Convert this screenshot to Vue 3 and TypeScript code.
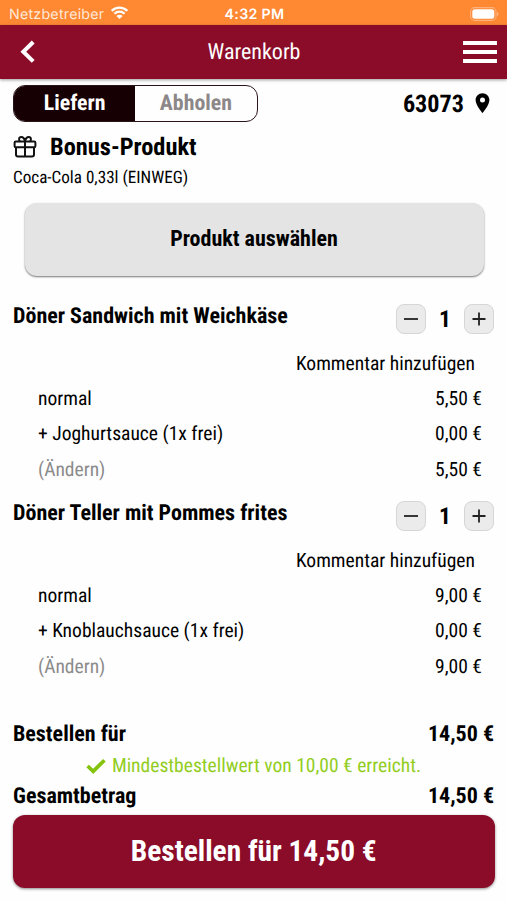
<script setup lang="ts">
interface Line {
  label: string
  price: string
  muted?: boolean
}

interface CartItem {
  name: string
  quantity: number
  lines: Line[]
}

const items: CartItem[] = [
  {
    name: 'Döner Sandwich mit Weichkäse',
    quantity: 1,
    lines: [
      { label: 'normal', price: '5,50 €' },
      { label: '+ Joghurtsauce (1x frei)', price: '0,00 €' },
      { label: '(Ändern)', price: '5,50 €', muted: true },
    ],
  },
  {
    name: 'Döner Teller mit Pommes frites',
    quantity: 1,
    lines: [
      { label: 'normal', price: '9,00 €' },
      { label: '+ Knoblauchsauce (1x frei)', price: '0,00 €' },
      { label: '(Ändern)', price: '9,00 €', muted: true },
    ],
  },
]
</script>

<template>
  <div class="screen">
    <div class="status">
      <span class="carrier">Netzbetreiber
        <svg class="wifi" width="19" height="14" viewBox="0 0 20 15">
          <path d="M1.6 5.2a12 12 0 0 1 16.8 0M4.6 8.3a7.7 7.7 0 0 1 10.8 0" fill="none" stroke="#fff" stroke-width="2.5" />
          <path d="M10 14 6.7 10.7a4.7 4.7 0 0 1 6.6 0Z" fill="#fff" />
        </svg>
      </span>
      <span class="clock">4:32 PM</span>
      <svg class="battery" width="30" height="14" viewBox="0 0 30 14">
        <rect x="0.6" y="0.6" width="25.4" height="12.8" rx="4" fill="none" stroke="#fff" stroke-opacity=".35" stroke-width="1.1" />
        <rect x="2.3" y="2.2" width="22" height="9.6" rx="2.5" fill="#fff" />
        <path d="M27.2 5v4.2c1.6-.6 1.6-3.6 0-4.2Z" fill="#fff" fill-opacity=".5" />
      </svg>
    </div>

    <header class="bar">
      <svg class="back" width="16" height="24" viewBox="0 0 16 24">
        <path d="M13.2 2 3.3 11.7l9.9 9.7" fill="none" stroke="#fff" stroke-width="4" />
      </svg>
      <h1 class="title">Warenkorb</h1>
      <div class="burger"><i></i><i></i><i></i></div>
    </header>

    <main class="body">
      <div class="mode">
        <div class="toggle">
          <span class="option active">Liefern</span>
          <span class="option">Abholen</span>
        </div>
        <div class="zip">
          <span>63073</span>
          <svg width="15" height="21" viewBox="0 0 14 21">
            <path fill-rule="evenodd" d="M7 .3C3.1.3.1 3.3.1 7.1.1 12.2 7 20.3 7 20.3s6.9-8.1 6.9-13.2C13.9 3.3 10.9.3 7 .3Zm0 4.3a2.5 2.5 0 1 1 0 5 2.5 2.5 0 0 1 0-5Z" fill="#000" />
          </svg>
        </div>
      </div>

      <div class="bonus">
        <svg width="24" height="22" viewBox="0 0 24 22">
          <g fill="none" stroke="#111" stroke-width="2">
            <rect x="1.6" y="5.6" width="20.8" height="5.6" rx="1.2" />
            <path d="M3 11.2v7.2q0 2 2 2h14q2 0 2-2v-7.2M12 5.6v14.8M12 5.4C11.4 2.5 9.9 1.1 8.2 1.1c-2.6 0-2.8 3.7-.8 4.4M12 5.4c.6-2.9 2.1-4.3 3.8-4.3 2.6 0 2.8 3.7.8 4.4" />
          </g>
        </svg>
        <h2>Bonus-Produkt</h2>
      </div>
      <p class="bonus-name">Coca-Cola 0,33l (EINWEG)</p>
      <button class="choose"><span>Produkt auswählen</span></button>

      <section v-for="item in items" :key="item.name" class="item">
        <div class="item-head">
          <h3>{{ item.name }}</h3>
          <div class="stepper">
            <button><svg width="14" height="14" viewBox="0 0 14 14"><path d="M0 7h14" stroke="#222" stroke-width="1.8" /></svg></button>
            <b>{{ item.quantity }}</b>
            <button><svg width="14" height="14" viewBox="0 0 14 14"><path d="M.5 7h13M7 .5v13" stroke="#222" stroke-width="1.8" /></svg></button>
          </div>
        </div>
        <div class="comment">Kommentar hinzufügen</div>
        <div v-for="line in item.lines" :key="line.label" class="line">
          <span :class="{ muted: line.muted }">{{ line.label }}</span>
          <span>{{ line.price }}</span>
        </div>
      </section>

      <div class="totals">
        <div class="sum"><span>Bestellen für</span><span>14,50 €</span></div>
        <div class="reached">
          <svg width="20" height="16" viewBox="0 0 20 16">
            <path d="m1.6 8 5.6 5.3L18.4 2.2" fill="none" stroke="#85c40c" stroke-width="3.7" />
          </svg>
          <span>Mindestbestellwert von 10,00 € erreicht.</span>
        </div>
        <div class="sum"><span>Gesamtbetrag</span><span>14,50 €</span></div>
      </div>
      <button class="order"><span>Bestellen für 14,50 €</span></button>
    </main>
  </div>
</template>

<style>
body { margin: 0; background: #fefefe; }
</style>

<style scoped>
* { box-sizing: border-box; }
.screen { width: 507px; height: 900px; overflow: hidden; background: #fefefe; color: #000; font-family: "Roboto Condensed", Roboto, sans-serif; font-stretch: 75%; font-size: 19.55px; white-space: nowrap; text-rendering: geometricPrecision; }
h1, h2, h3, p { margin: 0; font-weight: 700; }
button { border: 0; padding: 0; font: inherit; color: inherit; display: flex; align-items: center; justify-content: center; }
svg { display: block; flex: none; }
.status { height: 25px; padding: 2px 7px 0 9px; background: #ff8833; color: #fff; display: grid; grid-template-columns: 1fr auto 1fr; align-items: center; font-family: Inter, sans-serif; font-stretch: 100%; font-size: 14.2px; }
.carrier { display: flex; align-items: center; gap: 6px; color: #ffe9d8; letter-spacing: 0.25px; }
.clock { font-weight: 600; letter-spacing: 0.3px; padding-top: 1px; }
.carrier { padding-top: 1px; }
.wifi { margin-top: -2px; }
.battery { justify-self: end; }
.bar { height: 54px; padding: 0 10px 0 20px; background: #8b0c29; color: #fff; display: grid; grid-template-columns: 1fr auto 1fr; align-items: center; box-shadow: 0 1px 3px #0006; }
.title { font-size: 22px; font-weight: 400; padding-right: 9px; }
.burger { justify-self: end; width: 34px; display: grid; gap: 5px; }
.burger i { height: 4px; background: #fff; }
.body { padding: 6px 13px 0; }
.mode { height: 37px; display: flex; justify-content: space-between; }
.toggle { width: 244.5px; border: 1.5px solid #2b1418; border-radius: 12px; overflow: hidden; display: flex; font-weight: 700; font-size: 21.8px; }
.option { flex: 1; display: flex; align-items: center; justify-content: center; color: #8c8788; }
.option.active { background: #160004; color: #fff; }
.zip { display: flex; align-items: center; gap: 11px; padding-right: 4px; font-weight: 700; font-size: 24.2px; }
.bonus { height: 49px; display: flex; align-items: center; gap: 13px; }
.bonus h2 { font-size: 24.4px; }
.bonus-name { height: 12px; line-height: 14px; font-weight: 400; font-size: 17.1px; }
.choose { width: 459px; height: 73px; margin: 20px 0 26px 11.5px; padding-bottom: 2px; border-radius: 12px; background: #e4e4e4; box-shadow: 0 1px 2px #0008; font-weight: 700; font-size: 22px; }
.item { height: 197px; }
.item-head { height: 43px; display: flex; justify-content: space-between; }
.item-head h3 { font-size: 22px; line-height: 30px; }
.stepper { height: 34px; display: flex; align-items: center; }
.stepper button { width: 30px; height: 30px; border: 1px solid #d6d6d6; border-radius: 8px; background: #ebebeb; }
.stepper b { width: 38px; text-align: center; font-size: 23.5px; }
.comment { height: 36px; line-height: 38px; padding-right: 19px; text-align: right; }
.line { height: 35.4px; line-height: 36px; padding: 0 12px 0 25px; display: flex; justify-content: space-between; }
.muted { color: #8b8b8b; }
.totals { padding-top: 23px; }
.sum { height: 31px; display: flex; align-items: center; justify-content: space-between; font-weight: 700; font-size: 22px; }
.reached { height: 31px; display: flex; align-items: center; justify-content: center; gap: 6px; color: #92cd22; }
.order { width: 481.5px; height: 73px; margin-top: 2.5px; border-radius: 12px; background: #8b0c29; color: #fff; box-shadow: 0 1px 3px #0007; font-size: 29.4px; font-weight: 700; }
</style>
